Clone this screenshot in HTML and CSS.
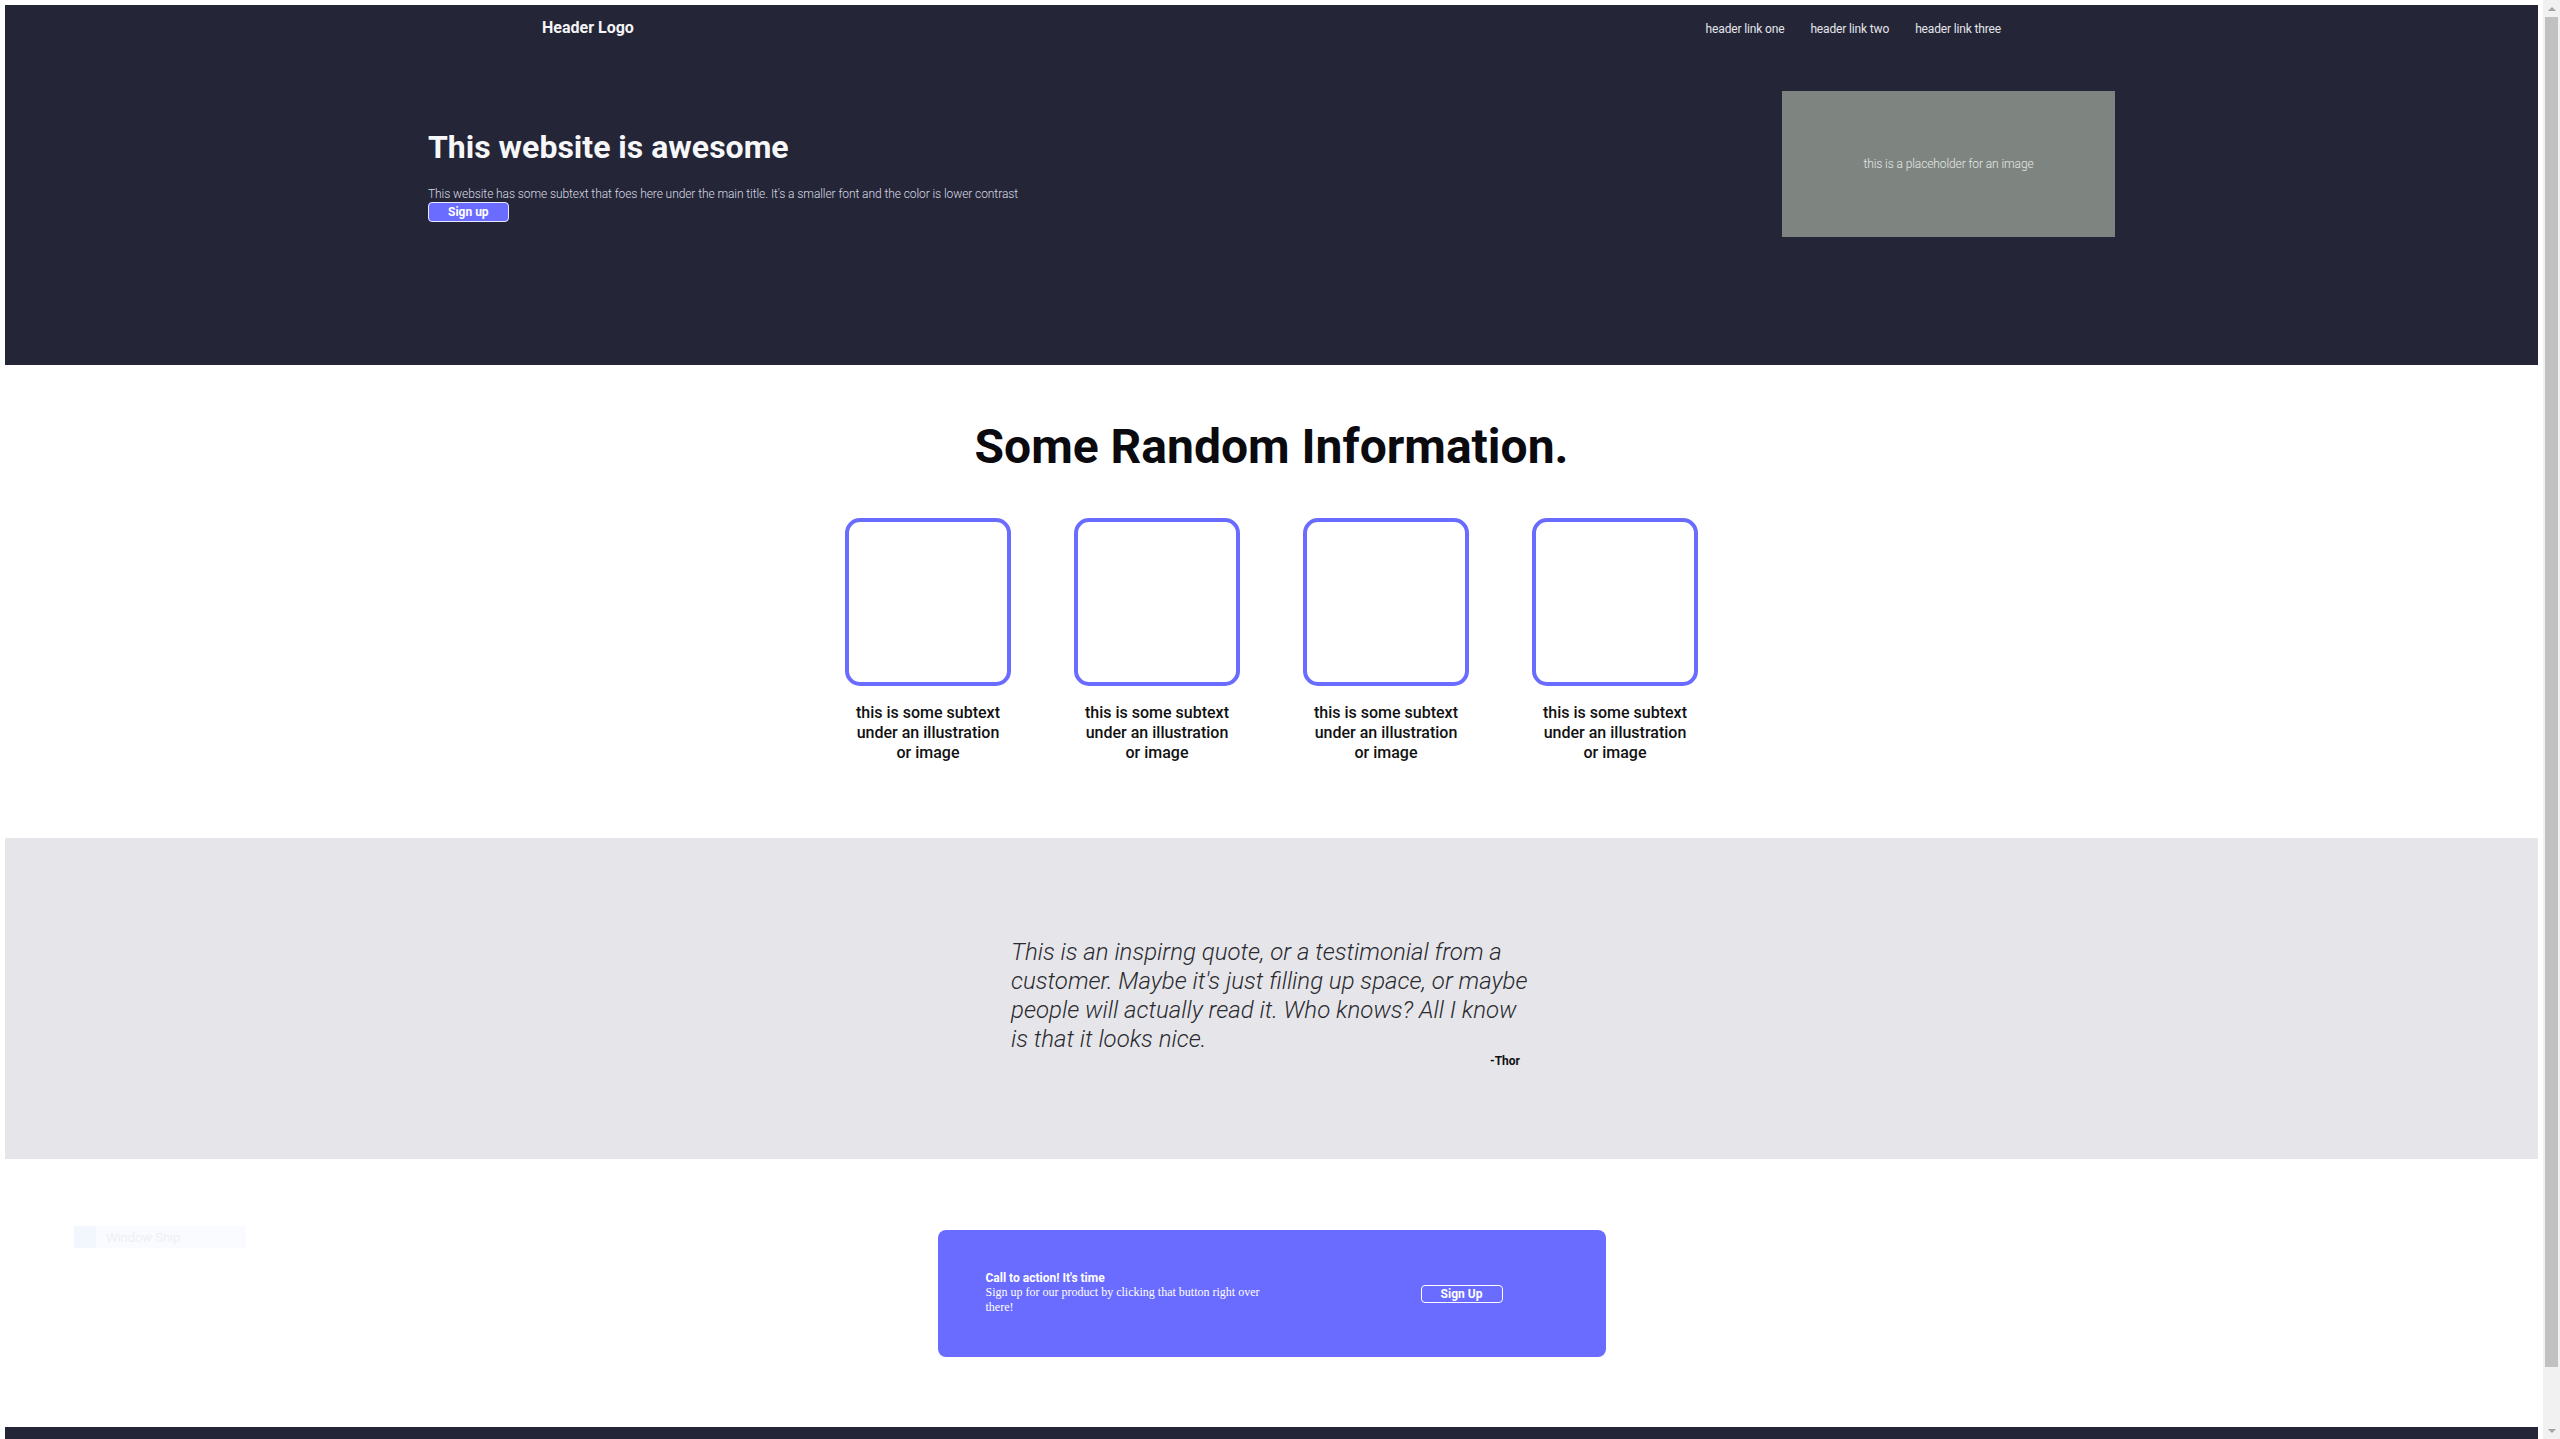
FILE: index.html
```html
<!DOCTYPE html>
<html lang="en">
<head>
<meta charset="utf-8">
<title>This website is awesome</title>
<link rel="stylesheet" href="styles.css">
</head>
<body>
<div class="page">
  <header class="site-header">
    <nav class="nav">
      <div class="logo">Header Logo</div>
      <ul class="links">
        <li><a href="#">header link one</a></li>
        <li><a href="#">header link two</a></li>
        <li><a href="#">header link three</a></li>
      </ul>
    </nav>
    <div class="hero">
      <div class="hero-text">
        <h1>This website is awesome</h1>
        <p>This website has some subtext that foes here under the main title. It's a smaller font and the color is lower contrast</p>
        <a class="btn-primary" href="#">Sign up</a>
      </div>
      <div class="hero-image">this is a placeholder for an image</div>
    </div>
  </header>

  <section class="info">
    <h2>Some Random Information.</h2>
    <div class="cards">
      <div class="card"><div class="card-box"></div><p>this is some subtext under an illustration or image</p></div>
      <div class="card"><div class="card-box"></div><p>this is some subtext under an illustration or image</p></div>
      <div class="card"><div class="card-box"></div><p>this is some subtext under an illustration or image</p></div>
      <div class="card"><div class="card-box"></div><p>this is some subtext under an illustration or image</p></div>
    </div>
  </section>

  <section class="quote-section">
    <blockquote class="quote">
      <p>This is an inspirng quote, or a testimonial from a customer. Maybe it's just filling up space, or maybe people will actually read it. Who knows? All I know is that it looks nice.</p>
      <cite>-Thor</cite>
    </blockquote>
  </section>

  <section class="cta-section">
    <div class="cta">
      <div class="cta-text">
        <h3>Call to action! It's time</h3>
        <p>Sign up for our product by clicking that button right over there!</p>
      </div>
      <a class="btn-outline" href="#">Sign Up</a>
    </div>
    <div class="snip-tip"><span class="snip-icon"></span><span class="snip-label">Window Snip</span></div>
  </section>

  <footer class="site-footer"></footer>
</div>
<div class="scrollbar">
  <div class="sb-btn"><span class="sb-up"></span></div>
  <div class="sb-track"><div class="sb-thumb"></div></div>
  <div class="sb-btn"><span class="sb-down"></span></div>
</div>
</body>
</html>
```

FILE: styles.css
```css
* { box-sizing: border-box; }

html, body {
  margin: 0;
  height: 1439px;
  overflow: hidden;
  background: #ffffff;
}

body {
  display: flex;
  font-family: Roboto, "Liberation Sans", sans-serif;
}

.page {
  flex: 1;
  padding: 5px 5px 0 5px;
  overflow: hidden;
}

/* ---------- Header ---------- */
.site-header {
  background: #242638;
  padding: 13px 0 128px;
}

.nav {
  width: 1459px;
  margin: 0 auto;
  display: flex;
  justify-content: space-between;
  align-items: baseline;
  height: 19px;
}

.logo {
  color: #f4f4f6;
  font-weight: 700;
  font-size: 16px;
  line-height: 20px;
}

.links {
  display: flex;
  list-style: none;
  margin: 0;
  padding: 0;
  gap: 26px;
}

.links a {
  color: #e4e5ea;
  text-decoration: none;
  font-size: 12px;
  line-height: 14px;
  letter-spacing: -0.15px;
}

.hero {
  width: 1687px;
  margin: 54px auto 0;
  display: flex;
  justify-content: space-between;
  align-items: flex-start;
}

.hero-text {
  padding-top: 37px;
  display: flex;
  flex-direction: column;
  align-items: flex-start;
}

.hero-text h1 {
  margin: 0;
  color: #f7f7f9;
  font-size: 32px;
  line-height: 38px;
  font-weight: 700;
}

.hero-text p {
  margin: 21px 0 0;
  color: #d9dae2;
  font-size: 12px;
  line-height: 14px;
  font-weight: 300;
  letter-spacing: -0.08px;
}

.btn-primary {
  margin-top: 1px;
  display: inline-block;
  height: 20px;
  padding: 0 19px;
  background: #6a6cff;
  border: 1px solid #e8e8ff;
  border-radius: 4px;
  color: #ffffff;
  font-size: 12px;
  line-height: 18px;
  font-weight: 700;
  text-decoration: none;
}

.hero-image {
  width: 333px;
  height: 146px;
  background: #7e8581;
  color: #e6e8e6;
  font-size: 12px;
  font-weight: 300;
  letter-spacing: -0.1px;
  display: flex;
  align-items: center;
  justify-content: center;
}

/* ---------- Info ---------- */
.info {
  padding: 54px 0 75px;
  text-align: center;
}

.info h2 {
  margin: 0;
  font-size: 48px;
  line-height: 56px;
  font-weight: 700;
  color: #0a0a0f;
}

.cards {
  margin-top: 43px;
  display: flex;
  justify-content: center;
  gap: 63px;
}

.card {
  width: 166px;
}

.card-box {
  width: 166px;
  height: 168px;
  border: 4px solid #6a6cff;
  border-radius: 15px;
}

.card p {
  margin: 17px 0 0;
  padding: 0 7px;
  font-size: 16px;
  line-height: 20px;
  font-weight: 500;
  color: #111111;
}

/* ---------- Quote ---------- */
.quote-section {
  background: #e6e6ea;
  padding: 100px 0 91px;
}

.quote {
  width: 521px;
  margin: 0 auto;
}

.quote p {
  margin: 0;
  font-size: 24px;
  line-height: 29px;
  font-style: italic;
  font-weight: 300;
  color: #2a2a30;
}

.quote cite {
  display: block;
  padding-right: 12px;
  text-align: right;
  font-style: normal;
  font-weight: 700;
  font-size: 12px;
  line-height: 14px;
  color: #111111;
}

/* ---------- CTA ---------- */
.cta-section {
  position: relative;
  padding: 71px 0 70px;
}

.cta {
  width: 668px;
  height: 127px;
  margin: 0 auto;
  background: #6a6cff;
  border-radius: 8px;
  padding: 0 103px 0 48px;
  display: flex;
  justify-content: space-between;
  align-items: center;
}

.cta-text {
  width: 290px;
  color: #ffffff;
}

.cta-text h3 {
  margin: 0;
  font-size: 12px;
  line-height: 13px;
  font-weight: 700;
}

.cta-text p {
  margin: 0;
  font-family: "Liberation Serif", "Times New Roman", serif;
  font-size: 12px;
  line-height: 15px;
}

.btn-outline {
  display: inline-block;
  height: 18px;
  width: 82px;
  border: 1px solid #ffffff;
  border-radius: 4px;
  color: #ffffff;
  text-align: center;
  font-size: 12px;
  line-height: 16px;
  font-weight: 700;
  text-decoration: none;
}

.snip-tip {
  position: absolute;
  left: 69px;
  top: 67px;
  width: 172px;
  height: 22px;
  background: #f9fbfe;
  display: flex;
  align-items: center;
}

.snip-icon {
  width: 22px;
  height: 22px;
  background: #f2f7fe;
}

.snip-label {
  margin-left: 10px;
  font-size: 13px;
  font-weight: 300;
  color: #e9ecf1;
}

/* ---------- Footer ---------- */
.site-footer {
  background: #242638;
  height: 80px;
}

/* ---------- Fake scrollbar ---------- */
.scrollbar {
  width: 17px;
  height: 1439px;
  background: #f1f1f1;
  display: flex;
  flex-direction: column;
}

.sb-btn {
  height: 17px;
  display: flex;
  align-items: center;
  justify-content: center;
}

.sb-up {
  width: 0;
  height: 0;
  border-left: 4px solid transparent;
  border-right: 4px solid transparent;
  border-bottom: 4px solid #a3a3a3;
}

.sb-down {
  width: 0;
  height: 0;
  border-left: 4px solid transparent;
  border-right: 4px solid transparent;
  border-top: 4px solid #a3a3a3;
}

.sb-track {
  flex: 1;
  padding: 0 2px;
}

.sb-thumb {
  height: 1350px;
  background: #c1c1c1;
}
```
